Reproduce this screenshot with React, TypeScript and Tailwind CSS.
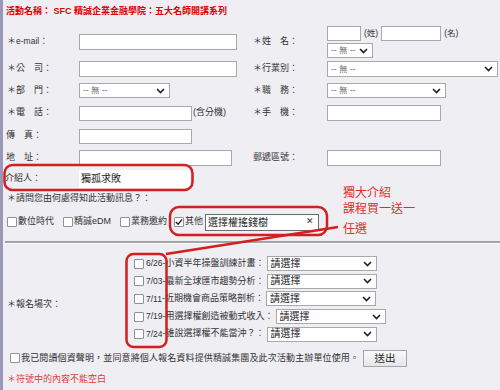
import React from 'react'

const sessions = [
  { date: '6/26', title: '小資半年操盤訓練計畫：' },
  { date: '7/03', title: '最新全球匯市趨勢分析：' },
  { date: '7/11', title: '近期機會商品策略剖析：' },
  { date: '7/19', title: '用選擇權創造被動式收入：' },
  { date: '7/24', title: '誰說選擇權不能當沖？：' },
]

function Box({ className = '' }: { className?: string }) {
  return <div className={`border border-[#a9a9ad] bg-white ${className}`} />
}

function Chevron() {
  return (
    <svg width="9" height="6" viewBox="0 0 9 6" className="shrink-0">
      <path d="M1 1l3.5 3.5L8 1" fill="none" stroke="#222" strokeWidth="1.6" />
    </svg>
  )
}

function Select({ className = '', text = '-- 無 --', textCls = 'text-[8.5px] text-[#666]' }: { className?: string; text?: string; textCls?: string }) {
  return (
    <div className={`flex items-center justify-between border border-[#a9a9ad] bg-white pl-[3px] pr-[4px] ${className}`}>
      <span className={`leading-none ${textCls}`}>{text}</span>
      <Chevron />
    </div>
  )
}

function Check({ checked = false }: { checked?: boolean }) {
  return (
    <span className="flex h-[10px] w-[10px] shrink-0 items-center justify-center rounded-[1px] border border-[#8f8f9d] bg-white">
      {checked && (
        <svg width="9" height="8" viewBox="0 0 9 8">
          <path d="M1 4l2.5 2.5L8 1" fill="none" stroke="#222" strokeWidth="1.6" />
        </svg>
      )}
    </span>
  )
}

export default function App() {
  return (
    <div className="relative flex h-[390px] w-[500px] overflow-hidden bg-[#eeeef3] text-[9px] text-[#333] font-['Liberation_Sans','Noto_Sans_CJK_TC',sans-serif]">
      <div className="w-[3px] shrink-0 bg-[#9a98b8]" />
      <div className="flex-1">
        <div className="h-[26px] pl-[3px] pt-[5px] text-[9px] font-bold leading-[12px] text-[#e00000]">
          活動名稱： SFC 精誠企業金融學院：五大名師開講系列
        </div>

        <div className="grid grid-cols-[76px_173px_75px_173px] grid-rows-[32px_22px_21px_24px_22px_21px_21px] items-center">
          <div className="pl-[4px]">＊<span className="text-[8.5px]">e-mail</span>：</div>
          <Box className="h-[16px] w-[158px]" />
          <div className="pl-[1px]">＊姓　名：</div>
          <div className="flex flex-col gap-[2px]">
            <div className="flex items-center">
              <Box className="h-[15px] w-[34px]" />
              <span className="ml-[3px] text-[8.5px]">(姓)</span>
              <Box className="ml-[3px] h-[15px] w-[60px]" />
              <span className="ml-[3px] text-[8.5px]">(名)</span>
            </div>
            <Select className="h-[15px] w-[46px]" />
          </div>

          <div className="pl-[4px]">＊公　司：</div>
          <Box className="h-[16px] w-[158px]" />
          <div className="pl-[1px]">＊行業別：</div>
          <Select className="h-[16px] w-[171px]" />

          <div className="pl-[4px]">＊部　門：</div>
          <Select className="h-[15px] w-[91px]" />
          <div className="pl-[1px]">＊職　務：</div>
          <Select className="h-[15px] w-[119px]" />

          <div className="pl-[4px]">＊電　話：</div>
          <div className="flex items-center">
            <Box className="h-[15px] w-[113px]" />
            <span className="ml-[1px]">(含分機)</span>
          </div>
          <div className="pl-[1px]">＊手　機：</div>
          <Box className="h-[16px] w-[114px]" />

          <div className="pl-[3px]">傳　真：</div>
          <Box className="h-[15px] w-[113px]" />
          <div />
          <div />

          <div className="pl-[3px]">地　址：</div>
          <Box className="h-[16px] w-[153px]" />
          <div className="pl-[1px]">郵遞區號：</div>
          <Box className="h-[16px] w-[114px]" />

          <div className="pl-[2px]">介紹人：</div>
          <div className="flex h-[18px] w-[111px] items-center bg-white pl-[2px] text-[10px] text-[#222]">獨孤求敗</div>
          <div />
          <div />
        </div>

        <div className="flex h-[20px] items-center pl-[4px]">＊請問您由何處得知此活動訊息？：</div>

        <div className="flex h-[26px] items-center pl-[4px]">
          <div className="flex w-[56px] items-center gap-[1px]"><Check /><span>數位時代</span></div>
          <div className="flex w-[57px] items-center gap-[1px]"><Check /><span>精誠eDM</span></div>
          <div className="flex w-[54px] items-center gap-[1px]"><Check /><span>業務邀約</span></div>
          <div className="flex items-center gap-[1px]"><Check checked /><span>其他</span></div>
          <div className="ml-[2px] flex h-[17px] w-[114px] items-center justify-between border border-[#6a6a70] bg-white pl-[2px] pr-[4px] text-[10px] text-[#222]">
            <span>選擇權搖錢樹</span>
            <span className="text-[9px] text-[#333]">✕</span>
          </div>
        </div>

        <div className="ml-[2px] mt-[6px] h-[3px] border-t-2 border-b border-t-[#a3a3aa] border-b-[#fbfbfd]" />

        <div className="flex pt-[11px]">
          <div className="flex w-[127px] items-center pl-[4px] pt-[12px]">＊報名場次：</div>
          <div className="flex flex-col pl-[4px]">
            {sessions.map((s) => (
              <div key={s.date} className="flex h-[17.6px] items-center">
                <Check />
                <span className="ml-[2px] text-[8.5px]">{s.date}</span>
                <span>-</span>
                <span>{s.title}</span>
                <Select className="ml-[2px] h-[15px] w-[110px]" text="請選擇" textCls="text-[10px] text-[#222]" />
              </div>
            ))}
          </div>
        </div>

        <div className="mt-[6px] flex h-[19px] items-center pl-[7px]">
          <Check />
          <span className="ml-[1px] inline-block w-[338px] whitespace-nowrap [text-align-last:justify]">我已閱讀個資聲明，並同意將個人報名資料提供精誠集團及此次活動主辦單位使用。</span>
          <button className="ml-[4px] flex h-[17px] w-[44px] items-center justify-center border border-[#a5a5ab] bg-gradient-to-b from-[#fafafa] to-[#e6e6ea] text-[10.5px] text-[#222]">
            送出
          </button>
        </div>

        <div className="mt-[4px] flex h-[16px] items-center pl-[4px] text-[#e23b3b]">＊符號中的內容不能空白</div>
      </div>

      <div className="absolute left-[343px] top-[184px] text-[12px] leading-[16px] text-[#d9302a] font-['Noto_Sans_CJK_TC',sans-serif]">
        <div>獨大介紹</div>
        <div>課程買一送一</div>
        <div className="mt-[4px]">任選</div>
      </div>

      <svg className="pointer-events-none absolute left-0 top-0" width="500" height="390">
        <g fill="none" stroke="#d31f1f" strokeWidth="2.5">
          <rect x="4.5" y="165" width="188" height="25" rx="8" />
          <rect x="170" y="207" width="157" height="28" rx="9" />
          <rect x="126.5" y="254" width="40" height="93" rx="7" />
          <line x1="338" y1="227" x2="166" y2="254" />
        </g>
      </svg>
    </div>
  )
}
